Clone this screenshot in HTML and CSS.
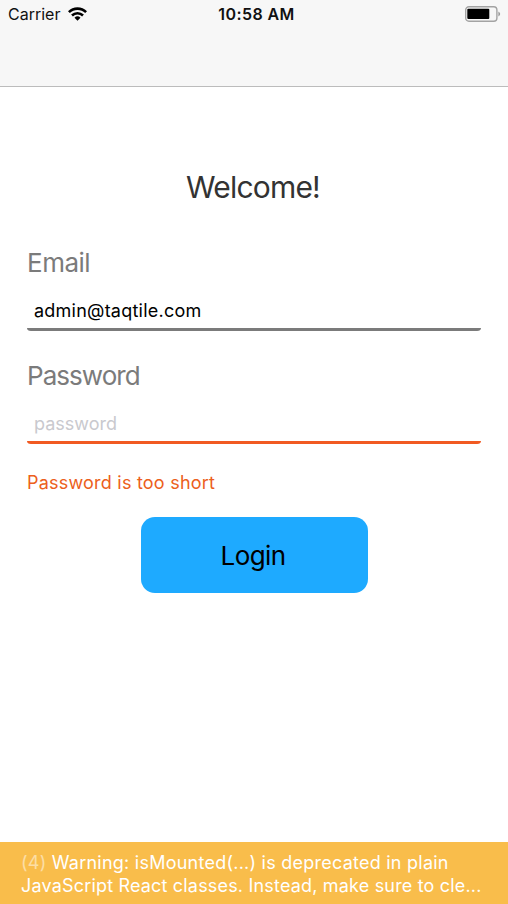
FILE: index.html
```html
<!DOCTYPE html>
<html lang="en">
<head>
<meta charset="utf-8">
<title>Login</title>
<link rel="stylesheet" href="styles.css">
</head>
<body>
<header class="header">
  <div class="status">
    <div class="carrier"><span class="carrier-name">Carrier</span>
      <svg class="wifi" width="19" height="14" viewBox="0 0 19 14"><g fill="none" stroke="#000" stroke-width="2.6"><path d="M.9 5.1a12.3 12.3 0 0 1 17.2 0"/><path d="M4 8.5a7.9 7.9 0 0 1 11 0"/></g><path d="M9.5 13.7 6.5 10.7a4.4 4.4 0 0 1 6 0z"/></svg>
    </div>
    <time class="clock">10:58 AM</time>
    <svg class="battery" width="36" height="16" viewBox="0 0 36 16"><rect x=".7" y=".7" width="31.2" height="14.6" rx="3.2" fill="none" stroke="#a3a3a3" stroke-width="1.4"/><rect x="2.3" y="2.8" width="22" height="10.2" rx="1"/><path d="M33.4 5.4q3.6 2.6 0 5.2z" fill="#999"/></svg>
  </div>
</header>
<main class="form">
  <h1 class="title">Welcome!</h1>
  <label class="label" for="email">Email</label>
  <div class="field"><input class="input" id="email" type="text" value="admin@taqtile.com"></div>
  <label class="label label-password" for="password">Password</label>
  <div class="field field-error"><input class="input input-password" id="password" type="text" placeholder="password"></div>
  <p class="error">Password is too short</p>
  <button class="login">Login</button>
</main>
<footer class="warning">
  <div class="line line-first"><span class="count">(4)</span> Warning: isMounted(...) is deprecated in plain</div>
  <div class="line">JavaScript React classes. Instead, make sure to cle...</div>
</footer>
</body>
</html>
```
FILE: styles.css
```css
* { box-sizing: border-box; }
body { margin: 0; height: 904px; display: flex; flex-direction: column; background: #fff; font-family: Inter, sans-serif; overflow: hidden; }
.header { height: 87px; background: #f7f7f7; border-bottom: 1px solid #bcbcbc; }
.status { height: 28px; display: grid; grid-template-columns: 1fr auto 1fr; align-items: center; padding: 0 7px 0 8px; font-size: 16px; }
.carrier { display: flex; align-items: center; gap: 8px; color: #111; }
.wifi { margin-top: -1px; }
.clock { font-weight: 600; letter-spacing: .4px; margin-left: 4px; color: #111; }
.battery { justify-self: end; }
.form { flex: 1; display: flex; flex-direction: column; padding: 80px 27px 0; }
.title { margin: 0; padding-right: 2px; text-align: center; font-size: 30px; line-height: 40px; font-weight: 400; letter-spacing: -.8px; color: #333; }
.label { margin-top: 36px; height: 40px; font-size: 26px; line-height: 40px; letter-spacing: -.5px; color: #7b7b7b; }
.field { height: 48px; padding: 8px 7px 0; border-bottom: 3px solid #7b7b7b; border-bottom-left-radius: 4px 3px; border-bottom-right-radius: 4px 3px; }
.field + .label { margin-top: 25px; }
.label-password { letter-spacing: -.95px; }
.input { display: block; width: 100%; height: 40px; padding: 0; margin: 0; border: 0; outline: 0; background: transparent; color: #000; font: 18px/40px Inter, sans-serif; letter-spacing: .23px; }
.input-password { letter-spacing: 0; }
.input::placeholder { color: #c9c9ce; opacity: 1; }
.field-error { border-color: #f15a22; }
.error { margin: 24px 0 0; font-size: 18px; line-height: 30px; letter-spacing: .22px; color: #ec5f20; }
.login { margin: 19px auto 0; width: 227px; height: 76px; padding: 0 2px 0 0; border: 0; border-radius: 14px; background: #1eaaff; color: #000; font: 26px Inter, sans-serif; letter-spacing: -.6px; }
.warning { height: 62px; padding: 9px 21px 0; background: #f9bd4b; color: #fff; font-size: 18px; }
.line { height: 23px; line-height: 23px; letter-spacing: .18px; white-space: nowrap; }
.line-first { letter-spacing: .24px; }
.count { opacity: .5; }
```
